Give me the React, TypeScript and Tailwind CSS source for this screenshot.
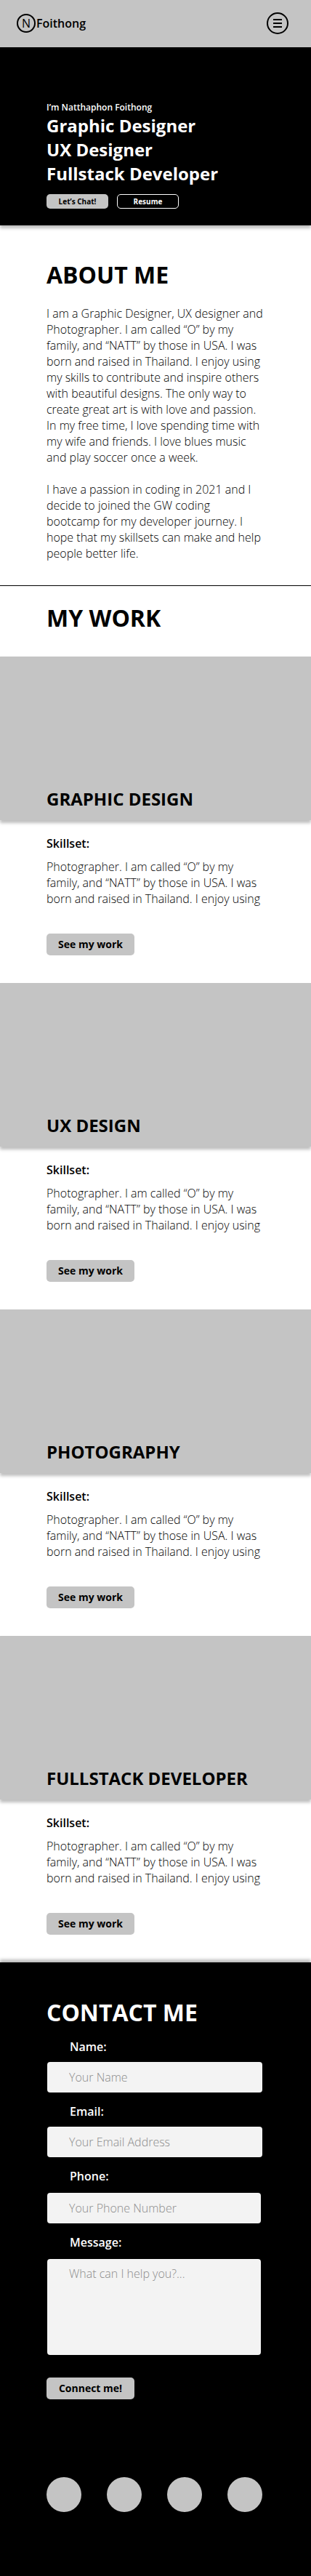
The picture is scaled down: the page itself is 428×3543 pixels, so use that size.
import React from "react";

const works = [
  "GRAPHIC DESIGN",
  "UX DESIGN",
  "PHOTOGRAPHY",
  "FULLSTACK DEVELOPER",
];

const socials = ["Facebook", "Instagram", "LinkedIn", "GitHub"];

function Header() {
  return (
    <header className="flex h-[65px] items-center justify-between bg-[#c4c4c4] pr-[31px] pb-px pl-[23px]">
      <a href="#home" className="flex items-center gap-px text-base leading-[22px] font-semibold">
        <span className="flex size-[26px] items-center justify-center rounded-full border-2 border-black font-normal">
          N
        </span>
        <span>Foithong</span>
      </a>
      <button type="button" aria-label="Menu" className="size-[30px]">
        <svg viewBox="0 0 30 30" fill="none" stroke="black" strokeWidth="2" className="size-full">
          <circle cx="15" cy="15" r="14" />
          <path d="M9 10h12M9 15h12M9 20h12" />
        </svg>
      </button>
    </header>
  );
}

function Hero() {
  return (
    <section
      id="home"
      className="bg-black px-16 pt-[75px] pb-[23px] text-white shadow-[0_4px_4px_rgba(0,0,0,0.25)]"
    >
      <p className="text-xs leading-4 font-semibold">I’m Natthaphon Foithong</p>
      <h1 className="text-2xl leading-[33px] font-bold">
        Graphic Designer
        <br />
        UX Designer
        <br />
        Fullstack Developer
      </h1>
      <div className="mt-3 flex gap-3 text-[10px] leading-[14px] font-bold">
        <button type="button" className="h-5 w-[85px] rounded-[5px] bg-[#c4c4c4] text-black">
          Let’s Chat!
        </button>
        <button type="button" className="h-5 w-[85px] rounded-[5px] border border-white">
          Resume
        </button>
      </div>
    </section>
  );
}

function About() {
  return (
    <section className="border-b border-black px-16 pt-[46px] pb-[33px]">
      <h2 className="text-[32px] leading-[44px] font-bold">ABOUT ME</h2>
      <div className="mt-5 flex flex-col gap-[22px] text-base leading-[22px] font-light">
        <p>
          I am a Graphic Designer, UX designer and Photographer. I am called “O” by my family, and
          “NATT” by those in USA. I was born and raised in Thailand. I enjoy using my skills to
          contribute and inspire others with beautiful designs. The only way to create great art is
          with love and passion. In my free time, I love spending time with my wife and friends. I
          love blues music and play soccer once a week.
        </p>
        <p>
          I have a passion in coding in 2021 and I decide to joined the GW coding bootcamp for my
          developer journey. I hope that my skillsets can make and help people better life.
        </p>
      </div>
    </section>
  );
}

function WorkCard({ title }: { title: string }) {
  return (
    <article>
      <div className="flex h-[225px] items-end bg-[#c4c4c4] px-16 pb-[13px] shadow-[0_4px_4px_rgba(0,0,0,0.25)]">
        <h3 className="text-2xl leading-[33px] font-bold">{title}</h3>
      </div>
      <div className="px-16 pt-[21px] pb-[38px]">
        <h4 className="text-base leading-[22px] font-semibold">Skillset:</h4>
        <p className="mt-[10px] text-base leading-[22px] font-light">
          Photographer. I am called “O” by my family, and “NATT” by those in USA. I was born and
          raised in Thailand. I enjoy using
        </p>
        <button
          type="button"
          className="mt-[37px] block h-[30px] w-[121px] rounded-[5px] bg-[#c4c4c4] text-sm font-bold"
        >
          See my work
        </button>
      </div>
    </article>
  );
}

const labelClass = "pl-[31px] text-base leading-[22px] font-semibold";
const fieldClass =
  "block w-full rounded-[4px] bg-[#f3f3f3] pr-4 pl-[30px] text-base leading-[22px] font-light text-black placeholder:text-[#8c8c8c] placeholder:opacity-100";

function Contact() {
  return (
    <section className="bg-black px-16 pt-[47px] pb-[88px] text-white shadow-[0_-4px_4px_rgba(0,0,0,0.25)]">
      <h2 className="text-[32px] leading-[44px] font-bold">CONTACT ME</h2>
      <form className="mt-[14px]">
        <div className="flex flex-col gap-[15px] pr-[3px] pl-px">
          <div className="flex flex-col gap-[10px]">
            <label htmlFor="name" className={labelClass}>
              Name:
            </label>
            <input id="name" type="text" placeholder="Your Name" className={`h-[42px] ${fieldClass}`} />
          </div>
          <div className="flex flex-col gap-[10px]">
            <label htmlFor="email" className={labelClass}>
              Email:
            </label>
            <input
              id="email"
              type="email"
              placeholder="Your Email Address"
              className={`h-[42px] ${fieldClass}`}
            />
          </div>
        </div>
        <div className="mt-[15px] flex flex-col gap-[15px] pr-[5px] pl-px">
          <div className="flex flex-col gap-3">
            <label htmlFor="phone" className={labelClass}>
              Phone:
            </label>
            <input
              id="phone"
              type="tel"
              placeholder="Your Phone Number"
              className={`h-[42px] ${fieldClass}`}
            />
          </div>
          <div className="flex flex-col gap-3">
            <label htmlFor="message" className={labelClass}>
              Message:
            </label>
            <textarea
              id="message"
              placeholder="What can I help you?..."
              className={`h-[132px] resize-none pt-[9px] ${fieldClass}`}
            />
          </div>
        </div>
        <button
          type="submit"
          className="mt-[31px] block h-[30px] w-[121px] rounded-[5px] bg-[#c4c4c4] text-sm font-bold text-black"
        >
          Connect me!
        </button>
      </form>
      <nav className="mt-[107px] flex justify-between pr-[3px]">
        {socials.map((name) => (
          <a key={name} href="#home" aria-label={name} className="size-12 rounded-full bg-[#c4c4c4]" />
        ))}
      </nav>
    </section>
  );
}

export default function App() {
  return (
    <div className="bg-white font-['Open_Sans',sans-serif] text-black">
      <Header />
      <main>
        <Hero />
        <About />
        <section>
          <h2 className="px-16 pt-[22px] pb-[31px] text-[32px] leading-[44px] font-bold">MY WORK</h2>
          {works.map((title) => (
            <WorkCard key={title} title={title} />
          ))}
        </section>
        <Contact />
      </main>
    </div>
  );
}
